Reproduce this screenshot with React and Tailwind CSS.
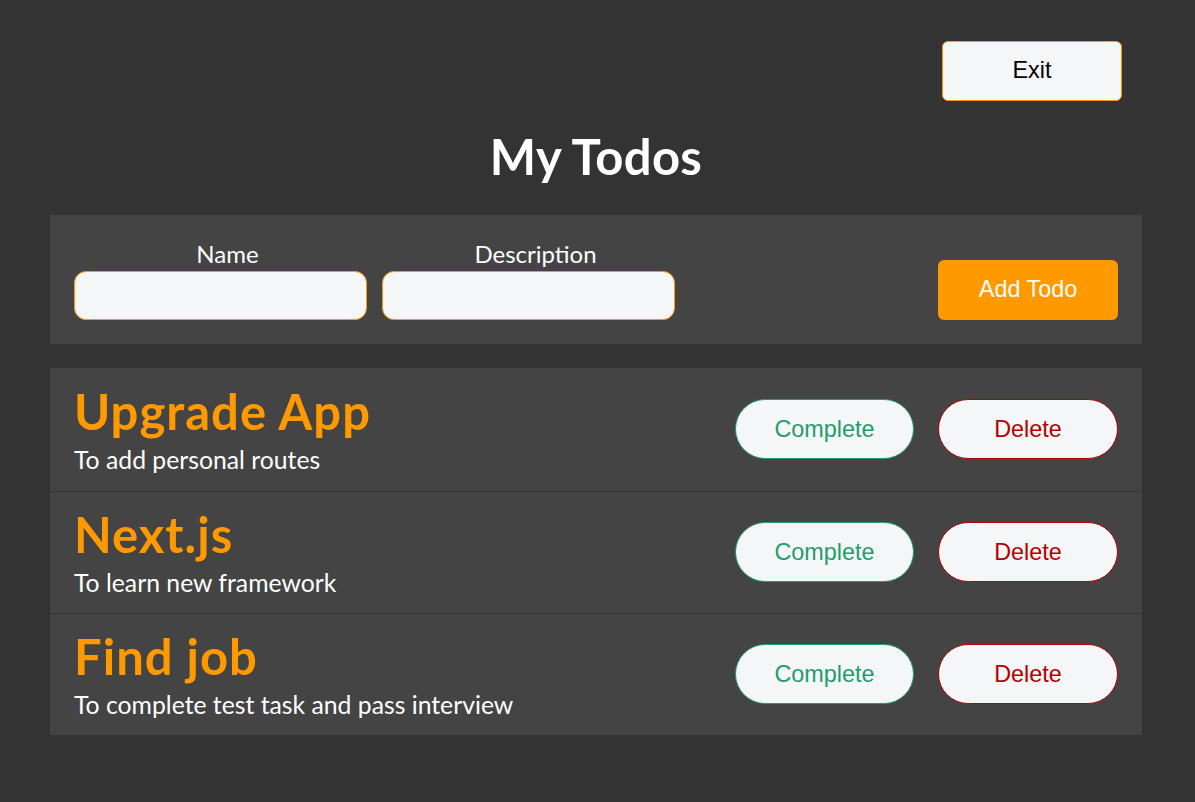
const todos = [
  { name: 'Upgrade App', description: 'To add personal routes' },
  { name: 'Next.js', description: 'To learn new framework' },
  { name: 'Find job', description: 'To complete test task and pass interview' },
]

export default function App() {
  return (
    <div className="min-h-[802px] bg-[#333333] font-['Lato','Noto_Sans',sans-serif]">
      <div className="ml-[50px] w-[1092px] pt-[41px]">
        {/* Exit */}
        <div className="flex justify-end pr-[20px]">
          <button className="h-[60px] w-[180px] rounded-[6px] border border-[#ff9900] bg-[#f5f6f8] font-['Liberation_Sans',Arial,sans-serif] text-[23.4px] text-black">
            Exit
          </button>
        </div>

        <h1 className="mt-[26px] text-center text-[49px] font-bold leading-[1.2] tracking-[0.3px] text-white">My Todos</h1>

        {/* Form */}
        <div className="mt-[29px] flex items-end justify-between bg-[#444444] px-[24px] pb-[24px] pt-[25px]">
          <div className="flex gap-[15px]">
            <label className="flex w-[293px] flex-col items-center">
              <span className="ml-[14px] text-[24px] leading-[28px] text-white">Name</span>
              <input className="mt-[3px] h-[49px] w-full rounded-[12px] border border-[#ff9900] bg-[#f5f6f8] outline-none" />
            </label>
            <label className="flex w-[293px] flex-col items-center">
              <span className="ml-[14px] text-[24px] leading-[28px] text-white">Description</span>
              <input className="mt-[3px] h-[49px] w-full rounded-[12px] border border-[#ff9900] bg-[#f5f6f8] outline-none" />
            </label>
          </div>
          <button className="h-[60px] w-[180px] rounded-[6px] bg-[#ff9900] font-['Liberation_Sans',Arial,sans-serif] text-[23.4px] text-white">
            Add Todo
          </button>
        </div>

        {/* List */}
        <div className="mt-[24px] bg-[#444444]">
          {todos.map((todo, i) => (
            <div
              key={todo.name}
              className={`flex items-center justify-between px-[24px] ${i > 0 ? 'h-[122px] border-t border-[#333333]' : 'h-[123px]'}`}
            >
              <div>
                <h2 className="text-[49px] font-bold leading-[54px] tracking-[1px] text-[#ff9900]">{todo.name}</h2>
                <p className="mt-[8px] text-[24.75px] leading-[28px] text-white">{todo.description}</p>
              </div>
              <div className="flex gap-[24px] font-['Liberation_Sans',Arial,sans-serif] text-[23.4px]">
                <button className="h-[60px] w-[179px] rounded-full border border-[#1f9d6b] bg-[#f5f6f8] text-[#1f9d6b]">
                  Complete
                </button>
                <button className="h-[60px] w-[180px] rounded-full border border-[#b40000] bg-[#f5f6f8] text-[#b40000]">
                  Delete
                </button>
              </div>
            </div>
          ))}
        </div>
      </div>
    </div>
  )
}
